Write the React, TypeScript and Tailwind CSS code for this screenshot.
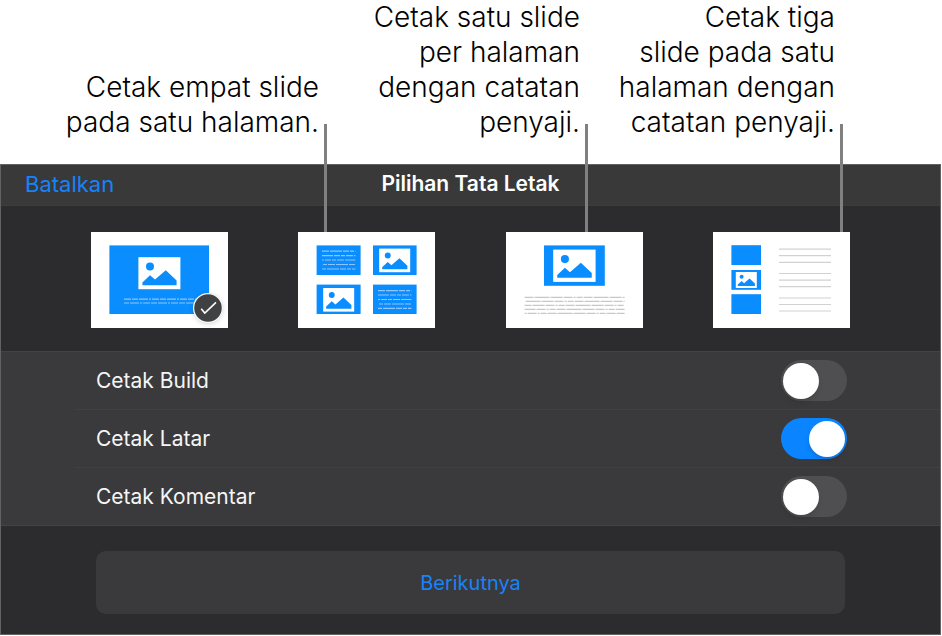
import { useState } from 'react';
import type { ReactNode } from 'react';

interface LayoutOption {
  id: string;
  label: string;
  drawing: ReactNode;
  line?: string;
}

const BLUE = '#0a8dff';

function Picture({ x, y, width }: { x: number; y: number; width: number }) {
  const scale = width / 42;
  return (
    <g transform={`translate(${x} ${y}) scale(${scale})`}>
      <rect width="42" height="32" fill="#fff" />
      <circle cx="11.6" cy="9.4" r="4" fill={BLUE} />
      <path d="M4 28V25.2L11.6 18 16.6 22.4 27.4 13 38.2 23.2V28Z" fill={BLUE} />
    </g>
  );
}

interface TextLinesProps {
  x: number;
  width: number;
  rows: number[];
  color: string;
  dashes?: string;
}

function TextLines({ x, width, rows, color, dashes }: TextLinesProps) {
  return (
    <g stroke={color} strokeWidth="1.2">
      {rows.map((y, idx) => (
        <line
          key={y}
          x1={x}
          x2={x + width}
          y1={y}
          y2={y}
          strokeDasharray={dashes}
          strokeDashoffset={idx * 9}
        />
      ))}
    </g>
  );
}

const layouts: LayoutOption[] = [
  {
    id: 'single',
    label: 'Satu slide per halaman',
    drawing: (
      <>
        <rect x="18.4" y="13.4" width="99.6" height="68.6" fill={BLUE} />
        <Picture x={47.4} y={25.2} width={42} />
        <TextLines x={33} width={72} rows={[67.1, 71]} color="#8fc5fb" dashes="7 1 6 1 9 1 2 1" />
      </>
    )
  },
  {
    id: 'four',
    label: 'Empat slide per halaman',
    line: 'left-[26px]',
    drawing: (
      <>
        <rect x="18.6" y="13.4" width="44" height="29.6" fill={BLUE} />
        <rect x="75" y="13.4" width="43.6" height="29.6" fill={BLUE} />
        <rect x="18.6" y="52.6" width="44" height="29.4" fill={BLUE} />
        <rect x="75" y="52.6" width="43.6" height="29.4" fill={BLUE} />
        <TextLines x={24} width={33.4} rows={[19.2, 23.7, 28, 32.5, 37]} color="#8fc5fb" dashes="7 1 12 1 6 1 4 1" />
        <Picture x={81.2} y={16.6} width={31} />
        <Picture x={25.2} y={56} width={31} />
        <TextLines x={80} width={33.4} rows={[58.7, 63, 67.5, 72, 76.4]} color="#8fc5fb" dashes="7 1 12 1 6 1 4 1" />
      </>
    )
  },
  {
    id: 'notes',
    label: 'Satu slide dengan catatan penyaji',
    line: 'left-[79px]',
    drawing: (
      <>
        <rect x="38" y="13.4" width="60.8" height="40.4" fill={BLUE} />
        <Picture x={47.2} y={17.6} width={42.4} />
        <TextLines x={18.6} width={100} rows={[65.3, 69.3, 73.3, 77.3, 81.3]} color="#c8c8c8" dashes="9 1 15 1 12 1 9 1 2 1 6 1" />
      </>
    )
  },
  {
    id: 'three',
    label: 'Tiga slide dengan catatan penyaji',
    line: 'left-[127px]',
    drawing: (
      <>
        <rect x="18.4" y="13.2" width="29.6" height="19.8" fill={BLUE} />
        <rect x="18.4" y="38" width="29.6" height="19.8" fill={BLUE} />
        <rect x="18.4" y="62.2" width="29.6" height="19.8" fill={BLUE} />
        <Picture x={22.8} y={40} width={21} />
        <TextLines
          x={66}
          width={52}
          rows={[17.1, 23.7, 30.4, 41.5, 48.1, 54.7, 66, 72.5, 79]}
          color="#d2d2d2"
        />
      </>
    )
  }
];

const switches = [
  { id: 'build', label: 'Cetak Build', on: false },
  { id: 'latar', label: 'Cetak Latar', on: true },
  { id: 'komentar', label: 'Cetak Komentar', on: false }
];

function Callouts() {
  return (
    <div className="grid grid-cols-[319fr_261fr_255fr_107fr] items-end pb-6 text-right text-[28px] font-[350] leading-[35px] text-black">
      <p>
        Cetak empat slide
        <br />
        pada satu halaman.
      </p>
      <p>
        Cetak satu slide
        <br />
        per halaman
        <br />
        dengan catatan
        <br />
        penyaji.
      </p>
      <p>
        Cetak tiga
        <br />
        slide pada satu
        <br />
        halaman dengan
        <br />
        catatan penyaji.
      </p>
    </div>
  );
}

function CheckBadge() {
  return (
    <svg viewBox="0 0 32 32" className="absolute left-[101px] top-[60px] h-8 w-8 drop-shadow-sm" aria-hidden="true">
      <circle cx="16" cy="16" r="14.4" fill="#404142" stroke="#f4f4f4" strokeWidth="1.3" />
      <path d="M9.2 16.8 12.8 21 24 10.4" fill="none" stroke="#fff" strokeWidth="1.6" />
    </svg>
  );
}

export default function App() {
  const [selected, setSelected] = useState('single');
  const [values, setValues] = useState(switches.map((item) => item.on));

  const toggle = (index: number) => {
    setValues((prev) => prev.map((value, idx) => (idx === index ? !value : value)));
  };

  return (
    <main className="bg-white font-['Inter',sans-serif]">
      <Callouts />

      <section className="mr-px border border-[#626263] bg-[#2c2c2e] text-[21px] leading-7">
        <header className="grid h-10 grid-cols-[1fr_auto_1fr] items-center bg-[#39393a] px-6 pb-0.5">
          <button type="button" className="justify-self-start text-[22px] text-[#1683fa]">
            Batalkan
          </button>
          <h1 className="font-semibold text-white">Pilihan Tata Letak</h1>
        </header>

        <div className="flex justify-between border-t border-[#3d3d3f] px-[90px] pb-[23px] pt-[26px]">
          {layouts.map((layout) => (
            <label key={layout.id} className="relative block cursor-pointer">
              <input
                type="radio"
                name="layout"
                className="sr-only"
                aria-label={layout.label}
                checked={selected === layout.id}
                onChange={() => setSelected(layout.id)}
              />
              <svg viewBox="0 0 137 96" className="block h-24 w-[137px] bg-white" aria-hidden="true">
                {layout.drawing}
              </svg>
              {selected === layout.id && <CheckBadge />}
              {layout.line && (
                <span className={`absolute bottom-full h-[108px] w-[3px] bg-[#808080] ${layout.line}`} />
              )}
            </label>
          ))}
        </div>

        <div className="border-y border-[#434345] bg-[#3a3a3c] pl-[74px]">
          {switches.map((item, idx) => (
            <div key={item.id} className="border-b border-[#414143] last:border-b-0">
              <div className="flex h-[57px] items-center justify-between pl-[21px] pr-[93px]">
                <label htmlFor={item.id} className="text-[#f5f5f6]">
                  {item.label}
                </label>
                <input
                  id={item.id}
                  type="checkbox"
                  role="switch"
                  checked={values[idx]}
                  onChange={() => toggle(idx)}
                  className="flex h-[41px] w-[66px] cursor-pointer appearance-none items-center rounded-full bg-[#4f4f51] px-[2px] before:h-9 before:w-9 before:rounded-full before:bg-white before:shadow-md checked:justify-end checked:bg-[#0a84ff]"
                />
              </div>
            </div>
          ))}
        </div>

        <div className="px-[95px] pb-5 pt-[25px]">
          <button type="button" className="h-[63px] w-full rounded-[10px] bg-[#3a3a3c] text-[20px] text-[#1683fa]">
            Berikutnya
          </button>
        </div>
      </section>
    </main>
  );
}
